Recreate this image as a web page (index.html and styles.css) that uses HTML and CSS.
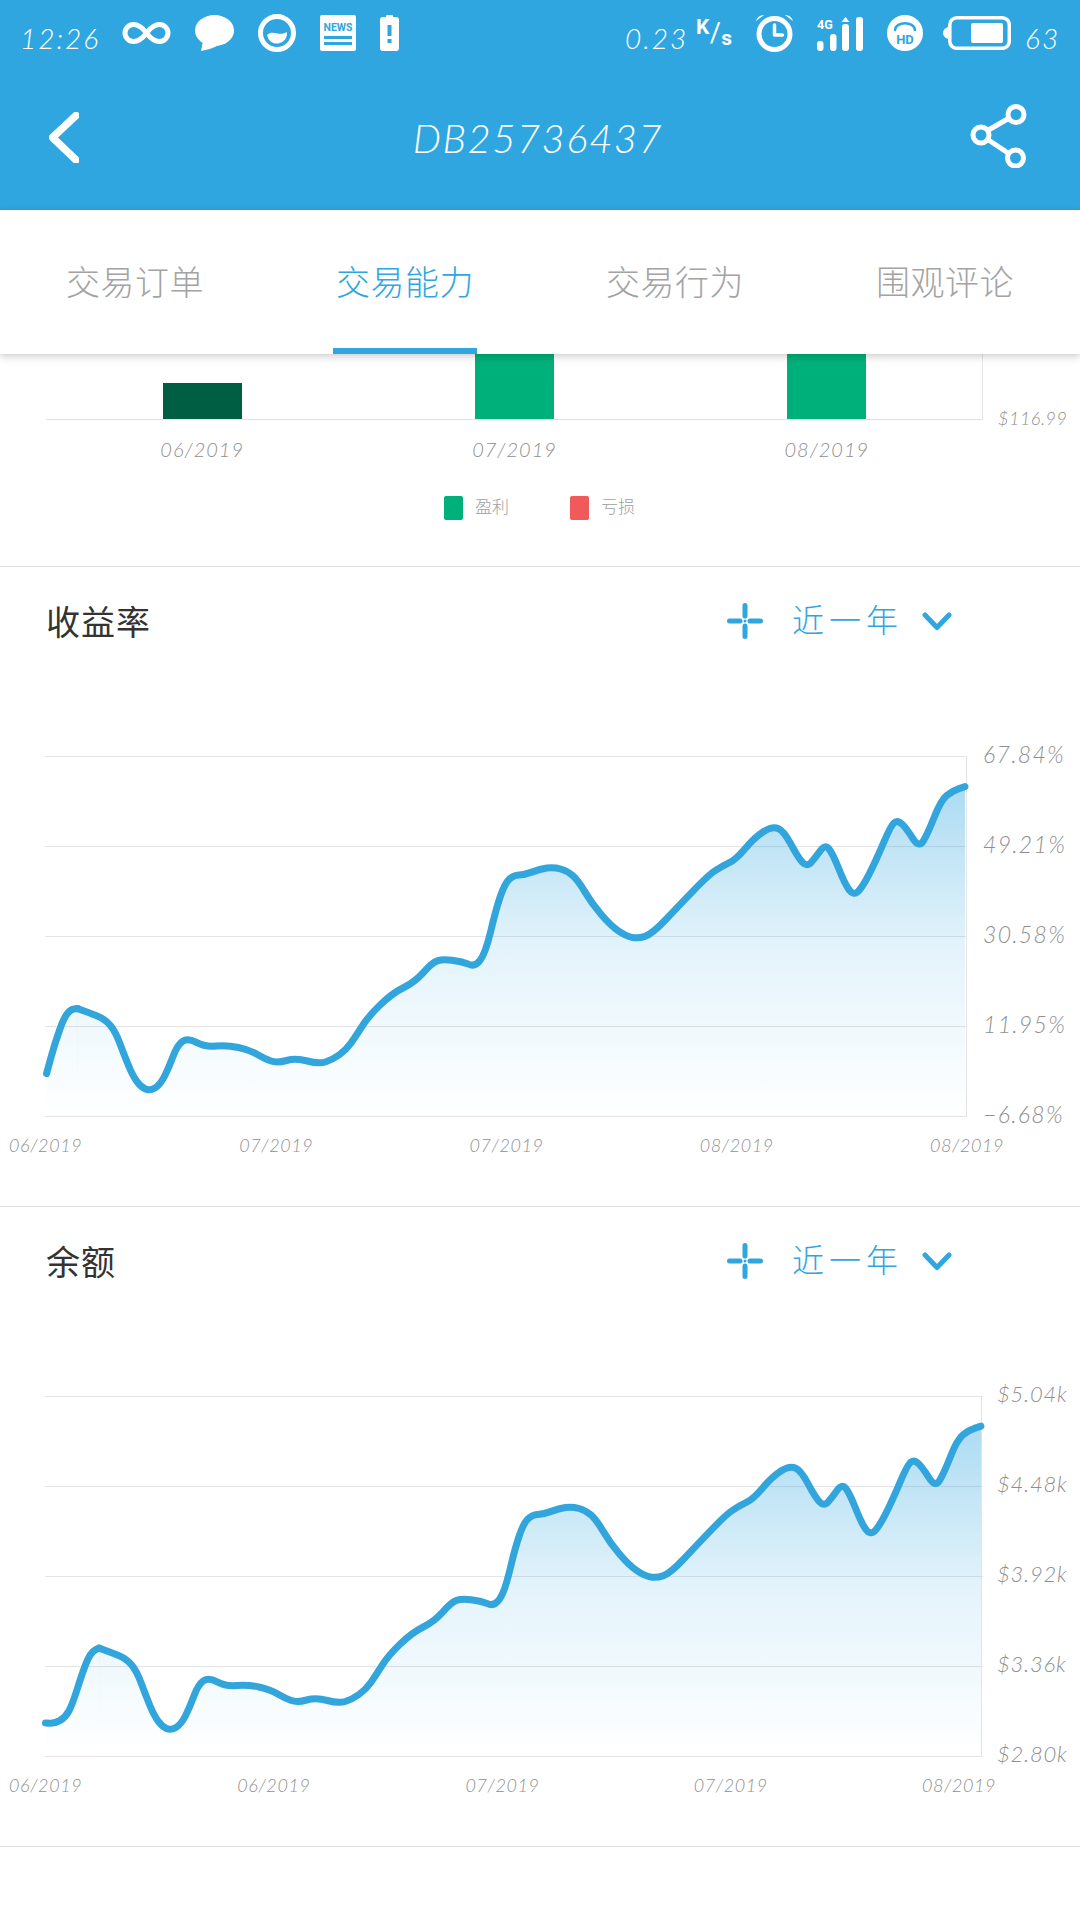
FILE: index.html
```html
<!DOCTYPE html>
<html lang="zh">
<head>
<meta charset="utf-8">
<title>DB25736437</title>
<link rel="stylesheet" href="styles.css">
</head>
<body>
<header class="appbar">
  <div class="status">
    <div class="status-group">
      <span class="st-text st-time">12:26</span>
      <svg class="i-inf" viewBox="0 0 49 24"><path class="ws" stroke-width="5" d="M24.5 12C20 6 16 3.500 11.500 3.500a8.500 8.500 0 0 0 0 17C16 20.500 20 18 24.500 12S33 3.500 37.500 3.500a8.500 8.500 0 0 1 0 17C33 20.500 29 18 24.500 12Z"/></svg>
      <svg class="i-chat" viewBox="0 0 39 36"><ellipse class="wf" cx="19.500" cy="15.500" rx="19.500" ry="15.500"/><path class="wf" d="M8 26 6 36c6-1 12-3 16-5Z"/></svg>
      <svg class="i-face" viewBox="0 0 38 38"><circle class="ws" stroke-width="5" cx="19" cy="19" r="16.500"/><path class="wf" d="M9 21c6-6 12 2 20-3a10 10 0 0 1-20 3Z"/></svg>
      <svg class="i-news" viewBox="0 0 36 36"><rect class="wf" width="36" height="36" rx="2"/><text class="news-word" x="18" y="16" text-anchor="middle">NEWS</text><rect class="bf" x="4" y="21" width="28" height="3"/><rect class="bf" x="4" y="27" width="28" height="3"/></svg>
      <svg class="i-alert" viewBox="0 0 19 36"><rect class="wf" x="6" width="7" height="4" rx="1"/><rect class="wf" y="2" width="19" height="34" rx="3"/><rect class="bf" x="7.500" y="10" width="4" height="11"/><rect class="bf" x="7.500" y="24" width="4" height="4"/></svg>
    </div>
    <div class="status-group status-right">
      <span class="st-text st-speed">0.23</span>
      <span class="kps"><span class="kps-k">K</span><span class="kps-sl">/</span><span class="kps-s">s</span></span>
      <svg class="i-alarm" viewBox="0 0 39 38"><circle class="ws" stroke-width="5" cx="19.500" cy="20" r="15.500"/><path class="ws" stroke-width="3.500" d="M19.500 11v10h8"/><path class="wf" d="M1 7c1-4 5-6 8-6L1 7ZM38 7c-1-4-5-6-8-6l8 6Z"/></svg>
      <svg class="i-signal" viewBox="0 0 47 35"><text class="sig-word" x="0" y="13">4G</text><rect class="wf" x="0" y="25" width="6.500" height="10" rx="3"/><rect class="wf" x="13" y="18" width="6.500" height="17" rx="3"/><rect class="wf" x="25" y="8" width="7" height="27" rx="3"/><path class="wf" d="M28.500 1 32.500 6H24.500Z"/><rect class="wf" x="39" y="1" width="7" height="34" rx="3"/></svg>
      <svg class="i-hd" viewBox="0 0 36 36"><circle class="wf" cx="18" cy="18" r="18"/><path class="bs" stroke-width="2.500" d="M8 15c1-9 19-9 20 0"/><text class="hd-word" x="18" y="29" text-anchor="middle">HD</text></svg>
      <svg class="i-batt" viewBox="0 0 68 34"><path class="wf" d="M5 11C2 12 0 14 0 17s2 5 5 6Z"/><rect class="ws" stroke-width="3.500" x="6.800" y="1.800" width="59.500" height="30.500" rx="7"/><rect class="wf" x="28" y="7" width="32" height="20" rx="2"/></svg>
      <span class="st-text st-pct">63</span>
    </div>
  </div>
  <div class="titlebar">
    <svg class="i-back" viewBox="0 0 30 51"><path class="ws" stroke-width="7.500" d="M27 3.500 3.500 25.500 27 48"/></svg>
    <h1 class="title">DB25736437</h1>
    <svg class="i-share" viewBox="0 0 57 64"><path class="ws" stroke-width="5" d="M18.500 26 38.500 14.500M18.500 36 38 49"/><circle class="ws" stroke-width="5" cx="46" cy="10.500" r="8"/><circle class="ws" stroke-width="5" cx="11" cy="31" r="8"/><circle class="ws" stroke-width="5" cx="45.500" cy="54" r="8"/></svg>
  </div>
</header>

<nav class="tabs">
  <div class="tab">交易订单</div>
  <div class="tab tab-active">交易能力</div>
  <div class="tab">交易行为</div>
  <div class="tab">围观评论</div>
</nav>

<section class="bar-section">
  <div class="bar-row">
    <div class="bar-plot">
      <div class="bar-slot"><div class="bar bar-dark"></div></div>
      <div class="bar-slot"><div class="bar bar-green"></div></div>
      <div class="bar-slot"><div class="bar bar-green"></div></div>
    </div>
    <span class="bar-y">$116.99</span>
  </div>
  <div class="bar-dates">
    <span>06/2019</span><span>07/2019</span><span>08/2019</span>
  </div>
  <div class="legend">
    <span class="legend-key key-green"></span><span class="legend-text">盈利</span>
    <span class="legend-key key-red"></span><span class="legend-text">亏损</span>
  </div>
</section>

<section class="chart-section">
  <div class="sec-head">
    <h2 class="sec-title">收益率</h2>
    <div class="range">
      <svg class="i-cross" viewBox="0 0 36 36"><path class="blue-s" stroke-width="5" d="M2.500 18H13M23 18H33.500M18 2.500V13M18 23V33.500"/><circle class="blue-f" cx="18" cy="18" r="1.500"/></svg>
      <span class="range-text">近一年</span>
      <svg class="i-down" viewBox="0 0 30 19"><path class="blue-s" stroke-width="5" d="M3 3 15 15.500 27 3"/></svg>
    </div>
  </div>
  <div class="chart chart-yield">
    <svg class="plot plot-yield" viewBox="0 0 922 361">
      <defs>
        <linearGradient id="areaFill" gradientUnits="userSpaceOnUse" x1="0" y1="30" x2="0" y2="360">
          <stop offset="0" stop-color="#2fa6df" stop-opacity=".4"/>
          <stop offset=".5" stop-color="#2fa6df" stop-opacity=".13"/>
          <stop offset="1" stop-color="#2fa6df" stop-opacity="0"/>
        </linearGradient>
      </defs>
      <path class="grid" d="M0 .5H922M0 90.500H922M0 180.500H922M0 270.500H922M0 360.500H922M921.500 0V361"/>
      <path class="area" d="M1.500 317.700L5.700 302.400Q10 287 14.400 274.500Q18.700 262 22.200 257.700Q25.600 253.400 29 253L33 252.600V360H1.500Z"/>
      <path id="curveArea" class="area" d="M32.500 252.600L38.500 254.800Q44.500 257 52.250 260Q60 263 65.200 269.300Q70.400 275.600 74.700 287Q79 298.500 83.300 309Q87.600 319.600 91.800 325.300Q96 331 100.400 333Q104.800 335 109.900 332Q115 329 119.400 320.500Q123.700 312 128 300.500Q132.300 289 137.500 285.400Q142.700 281.700 151.400 286.400Q160 291 171 290Q182 289 193.400 291.500Q204.700 294 212.400 298.500Q220 303 226 305Q232 307 241.500 304.500Q251 302 262.300 305Q273.500 308 280.300 306Q287 304 294 299Q301 294 306.200 286.700Q311.400 279.400 317.500 269.700Q323.500 260 335.600 248.500Q347.600 237 358.800 231.500Q370 226 378.500 216.400Q387 206.700 392.300 204.900Q397.500 203 407 204.300Q416.400 205.500 423.200 208Q430 211.500 435.300 204Q440.500 197 445.800 175Q451 153 455.300 140.500Q459.500 128 463.800 123.700Q468 119.400 474 119Q480 118.700 487.500 115.900Q495 113 501.900 112Q508.800 111 515.700 113Q522.500 115 527.800 119.700Q533 124.400 539.900 135.900Q546.700 147.400 556.200 158.500Q565.600 169.600 573.300 174.800Q581 180 587 181.300Q593 182.600 600 180.300Q607 178 619.900 164.500Q632.700 151 648.200 134.900Q663.700 118.700 670.600 114.400Q677.500 110 684.300 106.700Q691 103.400 700.500 92.200Q710 81 718.700 75.500Q727.400 70 733.100 72.400Q738.800 74.700 745.900 88.100Q753 101.500 757.500 106.300Q762 111 766.300 106.300Q770.500 101.500 775.300 94.800Q780 88 783.900 92.800Q787.700 97.600 793.800 112.800Q799.800 128 804.100 133.800Q808.400 139.500 812.700 135.800Q817 132 823.900 118.700Q830.700 105.300 838.400 87.200Q846 69 849.500 66.500Q853 64 857.400 68.400Q861.700 72.800 867.800 82.400Q873.800 92 878.100 85.300Q882.400 78.500 889.200 61.300Q896 44 902 39.300Q908 34.500 914 32.600L920 30.700V360H32.500Z"/>
      <path class="line" d="M1.500 317.700L5.700 302.400Q10 287 14.400 274.500Q18.700 262 22.200 257.700Q25.600 253.400 29 253L32.500 252.600"/>
      <path id="curveLine" class="line" d="M32.500 252.600L38.500 254.800Q44.500 257 52.250 260Q60 263 65.200 269.300Q70.400 275.600 74.700 287Q79 298.500 83.300 309Q87.600 319.600 91.800 325.300Q96 331 100.400 333Q104.800 335 109.900 332Q115 329 119.400 320.500Q123.700 312 128 300.500Q132.300 289 137.500 285.400Q142.700 281.700 151.400 286.400Q160 291 171 290Q182 289 193.400 291.500Q204.700 294 212.400 298.500Q220 303 226 305Q232 307 241.500 304.500Q251 302 262.300 305Q273.500 308 280.300 306Q287 304 294 299Q301 294 306.200 286.700Q311.400 279.400 317.500 269.700Q323.500 260 335.600 248.500Q347.600 237 358.800 231.500Q370 226 378.500 216.400Q387 206.700 392.300 204.900Q397.500 203 407 204.300Q416.400 205.500 423.200 208Q430 211.500 435.300 204Q440.500 197 445.800 175Q451 153 455.300 140.500Q459.500 128 463.800 123.700Q468 119.400 474 119Q480 118.700 487.500 115.900Q495 113 501.900 112Q508.800 111 515.700 113Q522.500 115 527.800 119.700Q533 124.400 539.900 135.900Q546.700 147.400 556.200 158.500Q565.600 169.600 573.300 174.800Q581 180 587 181.300Q593 182.600 600 180.300Q607 178 619.900 164.500Q632.700 151 648.200 134.900Q663.700 118.700 670.600 114.400Q677.500 110 684.300 106.700Q691 103.400 700.500 92.200Q710 81 718.700 75.500Q727.400 70 733.100 72.400Q738.800 74.700 745.900 88.100Q753 101.500 757.500 106.300Q762 111 766.300 106.300Q770.500 101.500 775.300 94.800Q780 88 783.900 92.800Q787.700 97.600 793.800 112.800Q799.800 128 804.100 133.800Q808.400 139.500 812.700 135.800Q817 132 823.900 118.700Q830.700 105.300 838.400 87.200Q846 69 849.500 66.500Q853 64 857.400 68.400Q861.700 72.800 867.800 82.400Q873.800 92 878.100 85.300Q882.400 78.500 889.200 61.300Q896 44 902 39.300Q908 34.500 914 32.600L920 30.700"/>
    </svg>
    <div class="yaxis yaxis-yield">
      <span>67.84%</span><span>49.21%</span><span>30.58%</span><span>11.95%</span><span>−6.68%</span>
    </div>
  </div>
  <div class="xaxis xaxis-yield">
    <span>06/2019</span><span>07/2019</span><span>07/2019</span><span>08/2019</span><span>08/2019</span>
  </div>
</section>

<section class="chart-section chart-section-last">
  <div class="sec-head">
    <h2 class="sec-title">余额</h2>
    <div class="range">
      <svg class="i-cross" viewBox="0 0 36 36"><path class="blue-s" stroke-width="5" d="M2.500 18H13M23 18H33.500M18 2.500V13M18 23V33.500"/><circle class="blue-f" cx="18" cy="18" r="1.500"/></svg>
      <span class="range-text">近一年</span>
      <svg class="i-down" viewBox="0 0 30 19"><path class="blue-s" stroke-width="5" d="M3 3 15 15.500 27 3"/></svg>
    </div>
  </div>
  <div class="chart chart-balance">
    <svg class="plot plot-balance" viewBox="0 0 938 361">
      <path class="grid" d="M0 .5H938M0 90.500H938M0 180.500H938M0 270.500H938M0 360.500H938M936.500 0V361"/>
      <path class="area" d="M.5 327L5 327.200Q10 327.400 15.200 324.400Q20.400 321.400 23.900 315Q27.300 308.500 31.700 294.800Q36 281 39.400 271.800Q42.800 262.600 45.400 258.800Q48 255 51 253.500L54.500 252.100V360H.5Z"/>
      <use href="#curveArea" transform="translate(21.700 -.5) scale(.9938 1)"/>
      <path class="line" d="M.5 327L5 327.200Q10 327.400 15.200 324.400Q20.400 321.400 23.900 315Q27.300 308.500 31.700 294.800Q36 281 39.400 271.800Q42.800 262.600 45.400 258.800Q48 255 51 253.500L54 252.100"/>
      <use href="#curveLine" transform="translate(21.700 -.5) scale(.9938 1)"/>
    </svg>
    <div class="yaxis yaxis-balance">
      <span>$5.04k</span><span>$4.48k</span><span>$3.92k</span><span>$3.36k</span><span>$2.80k</span>
    </div>
  </div>
  <div class="xaxis xaxis-balance">
    <span>06/2019</span><span>06/2019</span><span>07/2019</span><span>07/2019</span><span>08/2019</span>
  </div>
</section>
</body>
</html>
```
FILE: styles.css
```css
* { box-sizing: border-box; }
html, body { margin: 0; padding: 0; }
body {
  width: 1080px;
  height: 1920px;
  overflow: hidden;
  background: #fff;
  font-family: "Lato", "Noto Sans CJK SC", sans-serif;
  font-weight: 300;
  color: #8f8f8f;
}
h1, h2 { margin: 0; font-weight: 300; }

/* svg paint helpers */
.wf { fill: #fff; }
.bf { fill: #2fa6df; }
.ws { fill: none; stroke: #fff; stroke-linecap: round; stroke-linejoin: round; }
.bs { fill: none; stroke: #2fa6df; stroke-linecap: round; }
.blue-s { fill: none; stroke: #2fa6df; stroke-linecap: round; stroke-linejoin: round; }
.blue-f { fill: #2fa6df; }
.news-word { font: 700 10.500px "Roboto", sans-serif; fill: #2fa6df; }
.sig-word { font: 700 12.500px "Roboto", sans-serif; fill: #fff; }
.hd-word { font: 700 13px "Roboto", sans-serif; fill: #2fa6df; }

/* app bar */
.appbar { height: 210px; background: #2fa6df; color: #fff; }
.status {
  height: 66px;
  display: flex;
  justify-content: space-between;
  align-items: center;
  padding: 0 18px 0 20px;
}
.status-group { display: flex; align-items: center; gap: 24px; }
.status-right { gap: 23px; }
.st-text { font-size: 28px; font-style: italic; line-height: 32px; padding-top: 9px; color: #fff; }
.st-time { width: 80px; margin-right: -2px; letter-spacing: 2px; }
.st-speed { width: 63px; margin-right: -15px; letter-spacing: 2px; }
.st-pct { width: 37px; margin-left: -9px; letter-spacing: 2px; }
.kps {
  width: 36px;
  height: 32px;
  display: flex;
  justify-content: space-between;
  color: #fff;
  font: 700 21px/1 "Roboto", sans-serif;
}
.kps-k { align-self: flex-start; }
.kps-sl { align-self: center; font-weight: 400; font-size: 27px; }
.kps-s { align-self: flex-end; }
.i-inf { width: 49px; height: 24px; }
.i-chat { width: 39px; height: 36px; }
.i-face { width: 38px; height: 38px; }
.i-news { width: 36px; height: 36px; }
.i-alert { width: 19px; height: 36px; }
.i-alarm { width: 39px; height: 38px; }
.i-signal { width: 47px; height: 35px; }
.i-hd { width: 36px; height: 36px; }
.i-batt { width: 68px; height: 34px; margin-left: -3px; }

.titlebar {
  height: 144px;
  display: grid;
  grid-template-columns: 1fr auto 1fr;
  align-items: center;
  padding: 0 53px 0 49px;
}
.i-back { width: 30px; height: 51px; margin-top: -1px; }
.title { font-size: 40px; font-style: italic; line-height: 48px; color: #fff; letter-spacing: 1.500px; margin-top: 0; }
.i-share { width: 57px; height: 64px; margin-top: -4px; justify-self: end; }

/* tabs */
.tabs {
  position: relative;
  height: 144px;
  display: flex;
  background: #fff;
  box-shadow: 0 2px 8px rgba(0, 0, 0, .22);
}
.tab {
  width: 270px;
  display: flex;
  justify-content: center;
  align-items: center;
  padding-bottom: 4px;
  font-size: 34px;
  letter-spacing: .5px;
  color: #a3a3a3;
}
.tab-active { color: #2fa6df; position: relative; }
.tab-active::after {
  content: "";
  position: absolute;
  left: 63px;
  bottom: 0;
  width: 144px;
  height: 6px;
  background: #2fa6df;
}

/* clipped bar chart */
.bar-section { height: 212px; padding-left: 46px; }
.bar-row { display: flex; height: 66px; }
.bar-plot {
  width: 937px;
  display: grid;
  grid-template-columns: repeat(3, 1fr);
  border-right: 1px solid #e6e6e6;
  border-bottom: 1px solid #e2e2e2;
}
.bar-slot { display: flex; justify-content: center; align-items: flex-end; }
.bar { width: 79px; }
.bar-dark { height: 36px; background: #005f42; }
.bar-green { height: 65px; background: #00b07a; }
.bar-y {
  margin-left: 15px;
  align-self: flex-end;
  margin-bottom: -10px;
  font-size: 18px;
  line-height: 24px;
  font-style: italic;
  color: #8f8f8f;
  letter-spacing: .5px;
}
.bar-dates {
  width: 937px;
  margin-top: 17px;
  display: grid;
  grid-template-columns: repeat(3, 1fr);
  justify-items: center;
  font-size: 20px;
  line-height: 24px;
  font-style: italic;
  letter-spacing: 1px;
  color: #8f8f8f;
}
.legend {
  margin: 35px 0 0 398px;
  display: flex;
  align-items: center;
  height: 24px;
}
.legend-key { width: 19px; height: 24px; border-radius: 2px; }
.key-green { background: #00b07a; }
.key-red { background: #f15a5a; margin-left: 59px; }
.legend-text { margin-left: 12px; padding-bottom: 5px; font-size: 17px; color: #a0a0a0; width: 36px; }

/* line charts */
.chart-section { height: 640px; border-top: 1px solid #dedede; }
.chart-section-last { border-bottom: 1px solid #dedede; height: 641px; }
.sec-head {
  height: 111px;
  display: flex;
  justify-content: space-between;
  align-items: center;
  padding: 0 128px 0 46px;
}
.sec-title { font-size: 34px; color: #333; letter-spacing: 1px; font-weight: 400; padding-bottom: 4px; }
.range { display: flex; align-items: center; color: #2fa6df; padding-bottom: 3px; }
.i-cross { width: 36px; height: 36px; }
.range-text { margin-left: 29px; padding-bottom: 2px; font-size: 32px; letter-spacing: 5px; line-height: 40px; }
.i-down { width: 30px; height: 19px; margin-left: 19px; }

.chart { margin-top: 78px; padding-left: 45px; display: flex; align-items: flex-start; }
.plot { display: block; height: 361px; overflow: visible; flex: none; }
.plot-yield { width: 922px; }
.plot-balance { width: 938px; }
.grid { fill: none; stroke: #e4e4e4; stroke-width: 1; }
.area { fill: url(#areaFill); }
.line { fill: none; stroke: #31a5dc; stroke-width: 7; stroke-linejoin: round; stroke-linecap: round; }

.yaxis {
  height: 388px;
  margin-top: -16px;
  display: flex;
  flex-direction: column;
  justify-content: space-between;
  font-size: 23px;
  line-height: 28px;
  font-style: italic;
  color: #8f8f8f;
  letter-spacing: 1.300px;
}
.yaxis-yield { margin-left: 16px; }
.yaxis-balance { margin-left: 14px; font-size: 22px; letter-spacing: .8px; }

.xaxis {
  margin-top: 5px;
  margin-left: 9px;
  display: flex;
  justify-content: space-between;
  font-size: 18px;
  line-height: 24px;
  font-style: italic;
  letter-spacing: .6px;
  color: #8f8f8f;
}
.xaxis span { width: 73px; white-space: nowrap; }
.xaxis-yield { width: 994px; }
.xaxis-balance { width: 986px; }
```
